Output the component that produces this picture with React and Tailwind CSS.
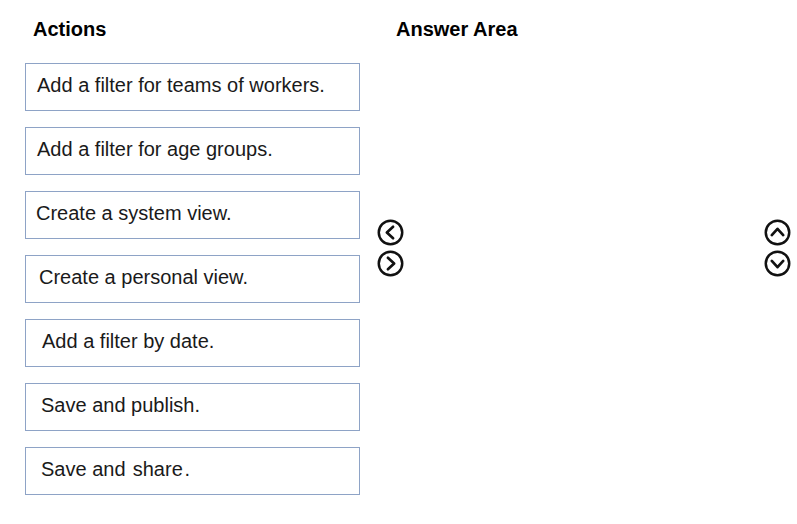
const actions = [
  { text: 'Add a filter for teams of workers.', pad: 'pl-[11px]' },
  { text: 'Add a filter for age groups.', pad: 'pl-[11px]' },
  { text: 'Create a system view.', pad: 'pl-[10px]' },
  { text: 'Create a personal view.', pad: 'pl-[13px]' },
  { text: 'Add a filter by date.', pad: 'pl-[16px]' },
  { text: 'Save and publish.', pad: 'pl-[15px]' },
  { text: 'Save and\u200a share\u200a.', pad: 'pl-[15px]' },
];

const CircleArrow = ({ dir }) => {
  const paths = {
    left: 'M15.5 7.5 L9.5 13 L15.5 18.5',
    right: 'M10.5 7.5 L16.5 13 L10.5 18.5',
    up: 'M7.5 15.5 L13 9.5 L18.5 15.5',
    down: 'M7.5 10.5 L13 16.5 L18.5 10.5',
  };
  return (
    <svg width="27" height="27" viewBox="0 0 26 26" className="block">
      <circle cx="13" cy="13" r="11.3" fill="none" stroke="#111" strokeWidth="2.4" />
      <path d={paths[dir]} fill="none" stroke="#111" strokeWidth="2.6" strokeLinecap="round" strokeLinejoin="round" />
    </svg>
  );
};

export default function App() {
  return (
    <div className="w-[797px] h-[524px] bg-white flex font-['Liberation_Sans',Arial,sans-serif] text-[#1a1a1a]">
      <div className="ml-[25px] w-[335px] flex flex-col">
        <h2 className="pl-[8px] pt-[17px] h-[63px] text-[20px] font-bold leading-[24px] text-black">Actions</h2>
        <div className="flex flex-col gap-[16px]">
          {actions.map((a) => (
            <div key={a.text} className={`h-[48px] border-[1.5px] border-[#8ea3c6] flex items-center pb-[4px] whitespace-pre ${a.pad} text-[20px]`}>
              {a.text}
            </div>
          ))}
        </div>
      </div>
      <div className="ml-[17px] pt-[219px] flex flex-col gap-[4px]">
        <CircleArrow dir="left" />
        <CircleArrow dir="right" />
      </div>
      <div className="flex-1">
        <h2 className="pt-[17px] -ml-[8px] text-[20px] font-bold leading-[24px] text-black">Answer Area</h2>
      </div>
      <div className="mr-[6px] pt-[219px] flex flex-col gap-[4px]">
        <CircleArrow dir="up" />
        <CircleArrow dir="down" />
      </div>
    </div>
  );
}
